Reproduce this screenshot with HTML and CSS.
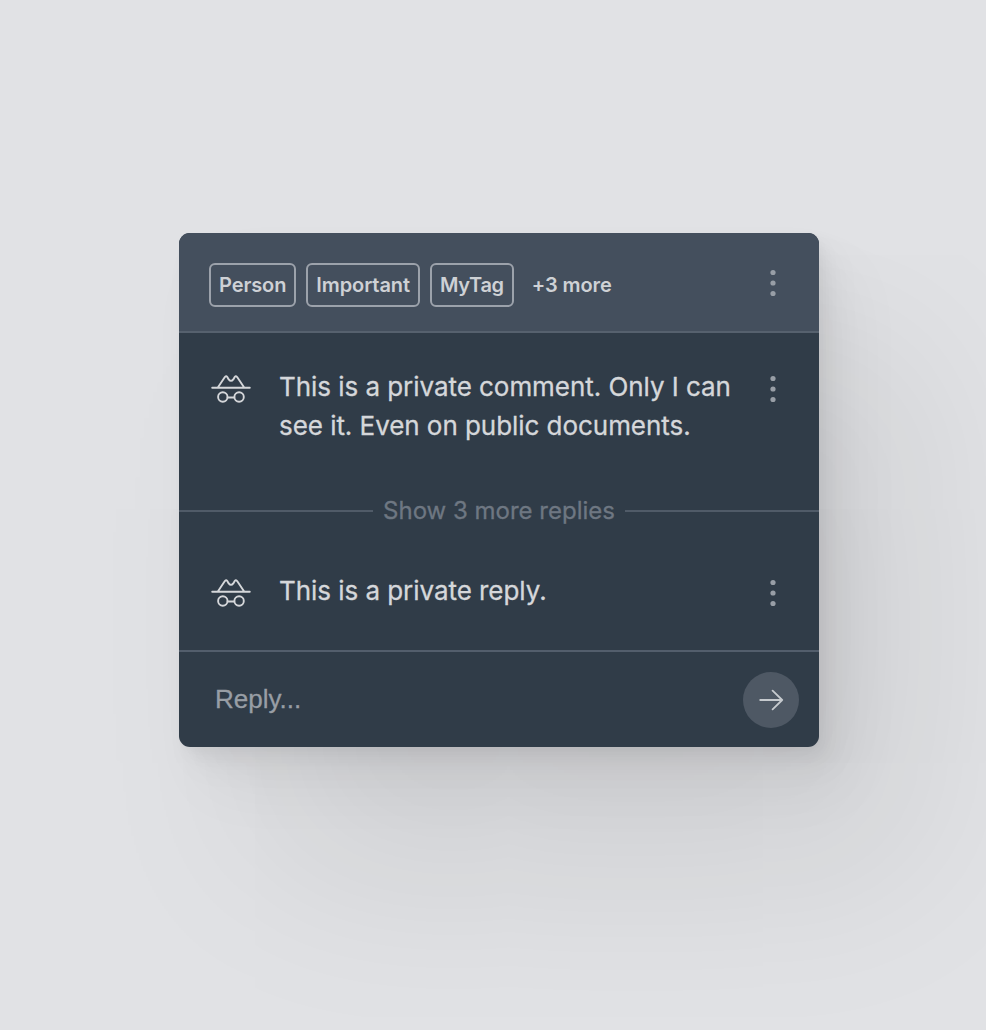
FILE: index.html
```html
<!DOCTYPE html>
<html lang="en">
<head>
<meta charset="utf-8">
<title>Private comment</title>
<link rel="stylesheet" href="styles.css">
</head>
<body>
<svg class="sprite" aria-hidden="true">
  <symbol id="incognito" viewBox="0 0 40 30">
    <path d="M1.2 13.7H38.8M7 13.2 13.7 3.2Q15 1.4 16.3 3L17.7 5.4Q20 8.4 22.3 5.4L23.7 3Q25 1.4 26.3 3.2L33 13.2"/>
    <circle cx="11.8" cy="23" r="4.7"/><circle cx="28.1" cy="23" r="4.7"/><path d="M16.7 23.5h6.5"/>
  </symbol>
  <symbol id="dots" viewBox="0 0 6 28">
    <circle cx="3" cy="3.5" r="2.6"/><circle cx="3" cy="14" r="2.6"/><circle cx="3" cy="24.5" r="2.6"/>
  </symbol>
</svg>
<main class="card">
  <header class="header">
    <span class="tag">Person</span>
    <span class="tag">Important</span>
    <span class="tag">MyTag</span>
    <span class="more">+3 more</span>
    <svg class="dots"><use href="#dots"/></svg>
  </header>
  <section class="comment">
    <svg class="incognito"><use href="#incognito"/></svg>
    <p class="text">This is a private comment. Only I can<br>see it. Even on public documents.</p>
    <svg class="dots"><use href="#dots"/></svg>
  </section>
  <div class="divider"><span class="show">Show 3 more replies</span></div>
  <section class="comment reply">
    <svg class="incognito"><use href="#incognito"/></svg>
    <p class="text">This is a private reply.</p>
    <svg class="dots"><use href="#dots"/></svg>
  </section>
  <footer class="footer">
    <span class="placeholder">Reply...</span>
    <button class="send" aria-label="Send"><svg class="arrow" viewBox="0 0 26 22"><path d="M2.2 11h22M14.6 1.7 24.2 11l-9.6 9.3"/></svg></button>
  </footer>
</main>
</body>
</html>
```
FILE: styles.css
```css
* { box-sizing: border-box; }
body {
  margin: 0;
  height: 1030px;
  padding: 233px 0 0 179px;
  overflow: hidden;
  background: #e1e2e5;
  font-family: Inter, "Liberation Sans", sans-serif;
}
.sprite { position: absolute; width: 0; height: 0; }
.card {
  width: 640px;
  height: 514px;
  display: flex;
  flex-direction: column;
  overflow: hidden;
  border-radius: 11px;
  background: #303c48;
  color: #d5d7da;
  box-shadow:
    3px 4px 8px rgba(0, 0, 0, .02),
    7px 10px 18px rgba(0, 0, 0, .03),
    14px 19px 34px rgba(0, 0, 0, .04),
    28px 38px 68px rgba(0, 0, 0, .045),
    90px 120px 190px rgba(0, 0, 0, .085);
}
.header {
  height: 100px;
  padding: 30px 43px 24px 30px;
  display: flex;
  align-items: flex-start;
  gap: 10px;
  border-bottom: 2px solid #56616e;
  background: #444f5d;
  font-size: 20px;
  font-weight: 600;
  letter-spacing: -.1px;
  line-height: 40px;
  color: #ced1d5;
}
.tag { padding: 0 8px; border: 2px solid #9ca2ab; border-radius: 6px; }
.tag:nth-child(3) { letter-spacing: -.3px; }
.more { margin-left: 8px; padding-top: 2px; }
.dots { width: 6px; height: 28px; margin-left: auto; flex: none; fill: #989ea6; }
.header .dots { margin-top: 6px; }
.comment {
  height: 158px;
  padding: 34px 43px 0 32px;
  display: flex;
  align-items: flex-start;
}
.comment .dots { margin-top: 8px; }
.incognito {
  width: 40px;
  height: 30px;
  margin: 7px 28px 0 0;
  flex: none;
  fill: none;
  stroke: #d5d7da;
  stroke-width: 1.9;
  stroke-linecap: round;
  stroke-linejoin: round;
}
.text {
  margin: 0;
  font-size: 26px;
  letter-spacing: -.05px;
  line-height: 39px;
  white-space: nowrap;
  -webkit-text-stroke: .3px currentColor;
}
.divider {
  height: 40px;
  display: flex;
  align-items: center;
  gap: 10px;
  color: #6e7782;
  font-size: 24px;
  white-space: nowrap;
  -webkit-text-stroke: .3px currentColor;
}
.divider::before, .divider::after { content: ""; height: 2px; flex: 1; background: #505b68; }
.show { padding-bottom: 2px; }
.reply { height: 119px; padding-top: 40px; }
.footer {
  height: 97px;
  padding: 0 20px 0 36px;
  display: flex;
  align-items: center;
  justify-content: space-between;
  border-top: 2px solid #535e6c;
}
.placeholder {
  font: 26px "Liberation Sans", sans-serif;
  color: #989ea5;
  -webkit-text-stroke: .3px currentColor;
}
.send {
  width: 56px;
  height: 56px;
  padding: 0;
  display: grid;
  place-items: center;
  border: 0;
  border-radius: 50%;
  background: #4e5864;
}
.arrow { width: 26px; height: 22px; fill: none; stroke: #c6cace; stroke-width: 1.8; stroke-linecap: round; stroke-linejoin: round; }
```
